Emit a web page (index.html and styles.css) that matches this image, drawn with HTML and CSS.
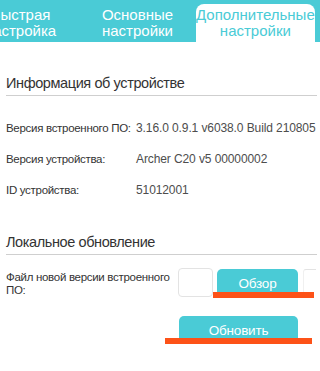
FILE: index.html
```html
<!DOCTYPE html>
<html lang="ru">
<head>
<meta charset="utf-8">
<title>Дополнительные настройки</title>
<link rel="stylesheet" href="styles.css">
</head>
<body>
<nav class="tabs">
  <div class="tab-strip">
    <div class="tab">Быстрая<br>настройка</div>
    <div class="tab">Основные<br>настройки</div>
    <div class="tab active">Дополнительные<br>настройки</div>
  </div>
</nav>
<main class="content">
  <section class="panel">
    <h2 class="panel-title">Информация об устройстве</h2>
    <div class="info-list">
      <div class="info-row"><span class="info-label">Версия встроенного ПО:</span><span class="info-value">3.16.0 0.9.1 v6038.0 Build 210805</span></div>
      <div class="info-row"><span class="info-label">Версия устройства:</span><span class="info-value">Archer C20 v5 00000002</span></div>
      <div class="info-row"><span class="info-label">ID устройства:</span><span class="info-value">51012001</span></div>
    </div>
  </section>
  <section class="panel upgrade">
    <h2 class="panel-title">Локальное обновление</h2>
    <div class="file-row">
      <label class="file-label">Файл новой версии встроенного ПО:</label>
      <div class="file-controls">
        <span class="file-box"></span>
        <button class="btn btn-browse">Обзор</button>
        <span class="file-extra"></span>
        <span class="mark mark-browse"></span>
      </div>
    </div>
    <div class="action-row">
      <button class="btn btn-upgrade">Обновить</button>
      <span class="mark mark-upgrade"></span>
    </div>
  </section>
</main>
</body>
</html>
```
FILE: styles.css
```css
* { box-sizing: border-box; }
html, body { margin: 0; padding: 0; background: #fff; }
body {
  width: 320px;
  height: 371px;
  overflow: hidden;
  font-family: "Liberation Sans", Arial, sans-serif;
  color: #333;
}
.tabs {
  height: 42px;
  background: #4acbd6;
  overflow: hidden;
  padding-top: 4px;
}
.tab-strip {
  display: flex;
  margin-left: -38px;
}
.tab {
  flex: 0 0 117px;
  height: 38px;
  padding-top: 3px;
  text-align: center;
  font-size: 15px;
  line-height: 16px;
  color: #fff;
  white-space: nowrap;
}
.tab.active {
  background: #fff;
  color: #4acbd6;
  border-radius: 8px 8px 0 0;
}
.content {
  padding: 0 3px 0 6px;
}
.panel-title {
  margin: 0;
  font-weight: normal;
  font-size: 14.5px;
  letter-spacing: -0.4px;
  line-height: 18px;
  padding-top: 1px;
  padding-bottom: 3px;
  border-bottom: 1px solid #cfcfcf;
  color: #333;
}
.panel:first-child .panel-title { margin-top: 31px; }
.info-list {
  margin-top: 24px;
  display: flex;
  flex-direction: column;
  gap: 14px;
}
.info-row {
  display: flex;
  align-items: flex-start;
  height: 17px;
}
.info-label {
  flex: 0 0 130px;
  font-size: 11.5px;
  letter-spacing: -0.3px;
  line-height: 14px;
  padding-top: 1px;
  color: #333;
  white-space: nowrap;
}
.info-value {
  font-size: 12px;
  letter-spacing: -0.1px;
  line-height: 15px;
  padding-top: 1px;
  color: #4d4d4d;
  white-space: nowrap;
}
.upgrade { margin-top: 33px; }
.file-row {
  display: flex;
  align-items: flex-start;
  margin-top: 13px;
}
.file-label {
  flex: 0 0 172px;
  font-size: 11.5px;
  letter-spacing: -0.3px;
  line-height: 13px;
  padding-top: 3px;
  padding-right: 4px;
  color: #333;
}
.file-controls {
  position: relative;
  display: flex;
  align-items: flex-start;
  flex: 1;
}
.file-box {
  width: 35px;
  height: 29px;
  border: 1px solid #e3e3e3;
  border-radius: 4px;
}
.btn {
  border: 0;
  background: #4acbd6;
  color: #fff;
  font-family: "Liberation Sans", Arial, sans-serif;
  font-size: 13.5px;
  letter-spacing: -0.2px;
  height: 28px;
  padding: 0;
  border-radius: 5px;
}
.btn-browse {
  width: 81px;
  margin-top: 1px;
  margin-left: 4px;
}
.file-extra {
  width: 13px;
  height: 29px;
  margin-left: 5px;
  margin-top: 1px;
  border-top: 1px solid #e3e3e3;
  border-left: 1px solid #f0f0f0;
  border-radius: 3px 0 0 0;
}
.mark {
  position: absolute;
  height: 6px;
  background: #fd5218;
}
.mark-browse {
  left: 35px;
  top: 24px;
  width: 101px;
}
.action-row {
  position: relative;
  margin-top: 18px;
  padding-left: 173px;
}
.btn-upgrade {
  width: 119px;
}
.mark-upgrade {
  left: 159px;
  top: 22px;
  width: 147px;
}
```
